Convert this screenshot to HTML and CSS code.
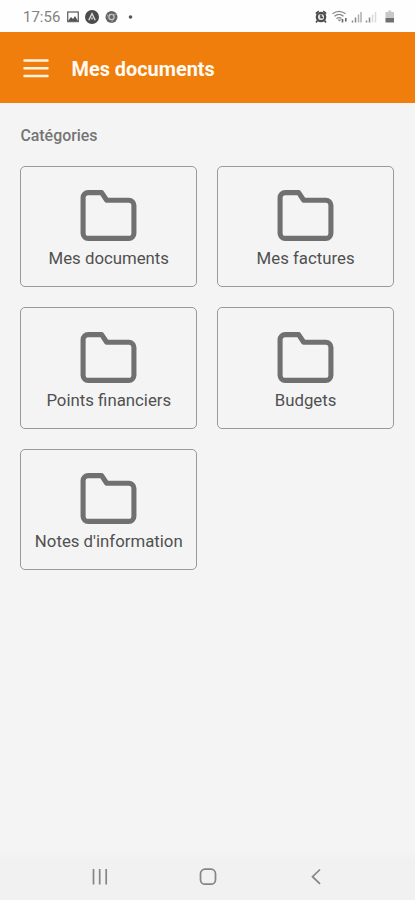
FILE: index.html
```html
<!DOCTYPE html>
<html lang="fr">
<head>
<meta charset="utf-8">
<meta name="viewport" content="width=device-width, initial-scale=1">
<title>Mes documents</title>
<link rel="stylesheet" href="styles.css">
</head>
<body>
<svg class="defs" aria-hidden="true">
  <symbol id="folder" viewBox="0 0 24 24">
    <path d="M22 19a2 2 0 0 1-2 2H4a2 2 0 0 1-2-2V5a2 2 0 0 1 2-2h5.300l2 3h8.700a2 2 0 0 1 2 2z"/>
  </symbol>
</svg>
<div class="status">
  <span class="time">17:56</span>
  <svg class="status-left" width="70" height="16" viewBox="0 0 70 16">
    <rect x="1.7" y="3" width="10.6" height="9.6" fill="none" stroke="#666" stroke-width="1.3"/>
    <path d="M2 12l3-4 2 2 2-3 3 5z" fill="#555"/>
    <circle cx="26" cy="8" r="7" fill="#4b4b4b"/>
    <path d="M22.800 11.200L26 4.500l3.200 6.700M26 8.500v2" fill="none" stroke="#ddd" stroke-width="1.400"/>
    <circle cx="45.500" cy="8" r="6" fill="#646464"/>
    <circle cx="45.500" cy="8" r="2.600" fill="#646464" stroke="#ccc" stroke-width="1.200"/>
    <path d="M45.500 5.400h5M43.300 9.400l-2.500-4.200M47.700 9.400l-2.400 4.200" stroke="#aaa" stroke-width=".8"/>
    <circle cx="64.500" cy="8" r="1.800" fill="#555"/>
  </svg>
  <svg class="status-right" width="84" height="16" viewBox="0 0 84 16">
    <circle cx="6" cy="8" r="4.200" fill="#ddd" stroke="#4b4b4b" stroke-width="2.200"/>
    <path d="M.800 4.700l3-2.500M11.200 4.700l-3-2.500M2.500 11.500L1 13.500M9.500 11.500l1.500 2M6 5.500v3h2" fill="none" stroke="#4b4b4b" stroke-width="1.600"/>
    <path d="M17.500 4.800q6.500-4.800 13 0M19.500 7.300q4.500-3.700 9 0M21.500 9.600q2.500-2 5 0" fill="none" stroke="#888" stroke-width="1.300"/>
    <path d="M24.500 12.500l-2-2h4z" fill="#888"/>
    <path d="M27.500 10v3.500M30.800 9v3.500" stroke="#666" stroke-width="1.600"/>
    <path d="M37.500 11.500v2M40.500 8.500v5" stroke="#888" stroke-width="1.500"/>
    <path d="M43.500 5.500v8M46 3v10.500" stroke="#b0b0b0" stroke-width="1.500"/>
    <path d="M51.500 11.500v2M54.500 8.500v5" stroke="#888" stroke-width="1.500"/>
    <path d="M57.500 5.500v8M60.500 3v10.500" stroke="#dadada" stroke-width="1.500"/>
    <path d="M73.300 1.500h3V3h2.700v7h-8.500V3h2.800z" fill="#c8c8c8"/>
    <path d="M70.500 9h8.500v4.500h-8.500z" fill="#707070"/>
  </svg>
</div>
<header class="appbar">
  <svg class="menu" width="26" height="20" viewBox="0 0 26 20"><path d="M1.500 1.500h23M1.500 9.200h23M1.500 16.900h23"/></svg>
  <h1 class="title">Mes documents</h1>
</header>
<main class="content">
  <h2 class="subtitle">Catégories</h2>
  <div class="grid">
    <div class="card"><svg class="folder"><use href="#folder"/></svg><span class="label">Mes documents</span></div>
    <div class="card"><svg class="folder"><use href="#folder"/></svg><span class="label">Mes factures</span></div>
    <div class="card"><svg class="folder"><use href="#folder"/></svg><span class="label">Points financiers</span></div>
    <div class="card"><svg class="folder"><use href="#folder"/></svg><span class="label">Budgets</span></div>
    <div class="card"><svg class="folder"><use href="#folder"/></svg><span class="label">Notes d'information</span></div>
  </div>
</main>
<nav class="navbar">
  <svg width="18" height="18" viewBox="0 0 18 18"><path d="M2.500 1v15.500M8.700 1v15.500M15.200 1v15.500"/></svg>
  <svg width="18" height="18" viewBox="0 0 18 18"><rect x="1.500" y="1.200" width="15" height="15" rx="4.500"/></svg>
  <svg width="18" height="18" viewBox="0 0 18 18"><path d="M13 1.500L5.500 8.700l7.500 7.200"/></svg>
</nav>
</body>
</html>
```
FILE: styles.css
```css
* { box-sizing: border-box; }
body {
  margin: 0;
  height: 900px;
  display: flex;
  flex-direction: column;
  background: #f4f4f4;
  font-family: Roboto, "Liberation Sans", sans-serif;
  overflow: hidden;
}
.defs { position: absolute; width: 0; height: 0; }
.status {
  height: 32px;
  display: flex;
  align-items: center;
  padding: 2px 16px 0 23px;
  background: #fefefe;
}
.time { width: 43px; font-size: 15px; color: #828282; line-height: 18px; }
.status-right { margin-left: auto; }
.appbar {
  height: 71px;
  display: flex;
  align-items: center;
  gap: 22.500px;
  padding: 2px 23px 0;
  background: #f07e0c;
}
.menu { fill: none; stroke: #fff3e2; stroke-width: 2.500; stroke-linecap: round; }
.title { margin: 0; padding-top: 2px; font-size: 19.900px; font-weight: 700; line-height: 24px; color: #fffaf2; }
.content { flex: 1; padding: 22px 21px 0 20.400px; }
.subtitle { margin: 0 0 20px; font-size: 15.900px; font-weight: 500; line-height: 21px; color: #757575; }
.grid { display: grid; grid-template-columns: 1fr 1fr; gap: 20px; }
.card {
  height: 121.400px;
  display: flex;
  flex-direction: column;
  align-items: center;
  padding-top: 18.300px;
  border: 1px solid #999;
  border-radius: 5px;
}
.folder {
  width: 61px;
  height: 61px;
  flex: none;
  fill: none;
  stroke: #707070;
  stroke-width: 2;
  stroke-linecap: round;
  stroke-linejoin: round;
}
.label { margin-top: 2px; font-size: 16.800px; line-height: 20px; color: #505050; white-space: nowrap; }
.navbar {
  height: 50px;
  display: flex;
  justify-content: center;
  gap: 90px;
  padding-top: 18px;
  background: linear-gradient(#f4f4f4, #f1f1f1 10px);
}
.navbar svg { fill: none; stroke: #858585; stroke-width: 1.700; }
```
